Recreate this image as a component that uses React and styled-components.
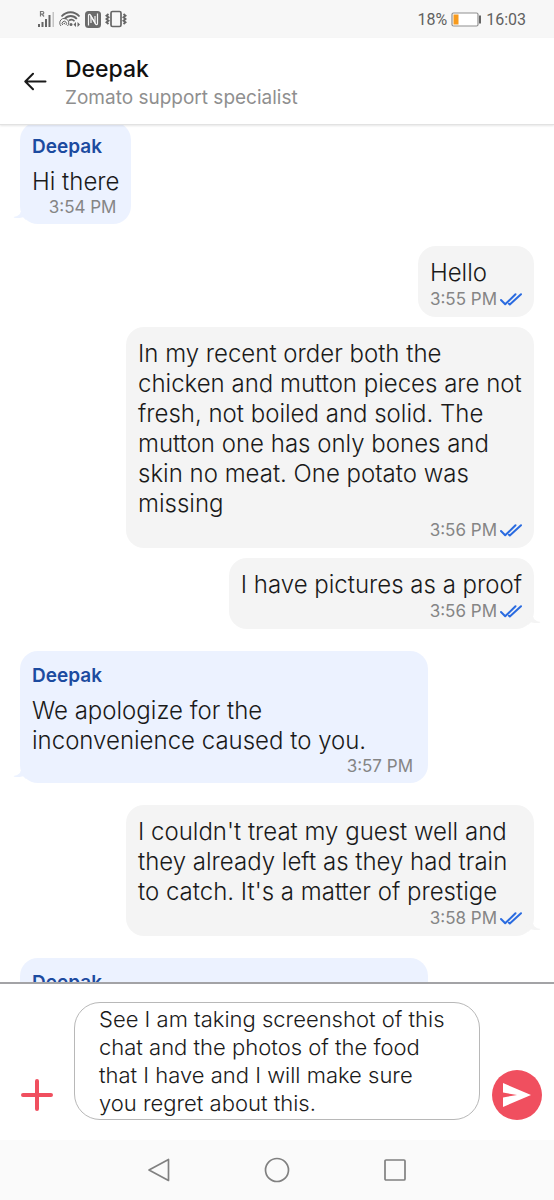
import React, { useState } from 'react';
import styled, { createGlobalStyle, css } from 'styled-components';

const GlobalStyle = createGlobalStyle`
  * {
    box-sizing: border-box;
  }
  body {
    margin: 0;
    background: #fff;
    color: #1a1a1a;
    font-family: Inter, 'Open Sans', sans-serif;
  }
  button, textarea {
    font: inherit;
    color: inherit;
  }
`;

const Screen = styled.div`
  display: flex;
  flex-direction: column;
  height: 100vh;
  overflow: hidden;
`;

const StatusBar = styled.div`
  display: flex;
  justify-content: space-between;
  align-items: center;
  flex: none;
  height: 38px;
  padding: 0 28px 0 37px;
  background: #f7f7f7;
  color: #616161;
  font-family: Roboto, sans-serif;
  font-size: 16px;
`;

const StatusGroup = styled.div`
  display: flex;
  align-items: center;
  gap: 4px;

  svg {
    display: block;
  }
`;

const Header = styled.header`
  display: flex;
  align-items: center;
  flex: none;
  gap: 16px;
  height: 87px;
  padding: 0 22px;
  background: #fff;
  border-bottom: 1px solid #e2e2e2;
  box-shadow: 0 1px 2px rgba(0, 0, 0, 0.1);
  z-index: 1;
`;

const Contact = styled.div`
  padding-top: 4px;
`;

const IconButton = styled.button`
  display: flex;
  align-items: center;
  justify-content: center;
  flex: none;
  width: ${({ $size }) => $size}px;
  height: ${({ $size }) => $size}px;
  padding: 0;
  border: 0;
  border-radius: 50%;
  background: ${({ $filled }) => ($filled ? '#f04f5f' : 'none')};
  cursor: pointer;
`;

const ContactName = styled.h1`
  margin: 0;
  color: #111;
  font-size: 23px;
  font-weight: 500;
  line-height: 30px;
`;

const ContactRole = styled.p`
  margin: 0;
  color: #8f8f8f;
  font-size: 19px;
  line-height: 28px;
`;

const Chat = styled.main`
  flex: 1;
  min-height: 0;
  padding: 0 20px;
  overflow: hidden;
`;

// the list is scrolled a little way under the header
const MessageList = styled.ol`
  display: flex;
  flex-direction: column;
  gap: 22px;
  margin: -3px 0 0;
  padding: 0;
  list-style: none;
`;

const Group = styled.li`
  display: flex;
  flex-direction: column;
  align-items: ${({ $own }) => ($own ? 'flex-end' : 'flex-start')};
  gap: 10px;
`;

const Bubble = styled.article`
  position: relative;
  width: ${({ $wide }) => ($wide ? 'calc(100% - 106px)' : 'auto')};
  padding: 12px 12px 7px;
  border-radius: 18px;
  background: ${({ $own }) => ($own ? '#f4f4f4' : '#ecf2ff')};
`;

const Tail = styled.svg`
  position: absolute;
  bottom: 2px;
  fill: ${({ $own }) => ($own ? '#f4f4f4' : '#ecf2ff')};
  ${({ $own }) =>
    $own
      ? css`
          right: -7px;
          transform: scaleX(-1);
        `
      : css`
          left: -7px;
        `}
`;

const Sender = styled.h2`
  margin: 0 0 8px;
  color: #1c4ba0;
  font-size: 19px;
  font-weight: 600;
  line-height: 25px;
`;

const MessageText = styled.p`
  margin: 0;
  font-size: 24px;
  font-weight: 300;
  line-height: 30px;
  white-space: pre-line;
`;

const Meta = styled.div`
  display: flex;
  justify-content: flex-end;
  align-items: center;
  gap: 3px;
  height: ${({ $own }) => ($own ? 22 : 20)}px;
  padding-right: ${({ $own }) => ($own ? 0 : 3)}px;
  color: #858585;
  font-size: 17px;
`;

const Composer = styled.form`
  display: flex;
  align-items: flex-end;
  flex: none;
  gap: 12px;
  padding: 18px 12px 20px;
  border-top: 2px solid #a3a3a6;
  background: #fff;
`;

const Draft = styled.textarea`
  flex: 1;
  min-width: 0;
  height: 118px;
  padding: 2px 24px;
  border: 1px solid #b8b8b8;
  border-radius: 26px;
  outline: none;
  background: #fff;
  font-size: 22px;
  font-weight: 300;
  line-height: 28px;
  resize: none;
  overflow: hidden;
`;

const NavBar = styled.nav`
  display: flex;
  justify-content: center;
  align-items: center;
  flex: none;
  gap: 90px;
  height: 60px;
  background: #fafafa;
`;

const groups = [
  {
    sender: 'Deepak',
    messages: [{ text: 'Hi there', time: '3:54 PM' }],
  },
  {
    own: true,
    messages: [
      { text: 'Hello', time: '3:55 PM' },
      {
        text: 'In my recent order both the\nchicken and mutton pieces are not\nfresh, not boiled and solid. The\nmutton one has only bones and\nskin no meat. One potato was\nmissing',
        time: '3:56 PM',
        wide: true,
      },
      { text: 'I have pictures as a proof', time: '3:56 PM' },
    ],
  },
  {
    sender: 'Deepak',
    messages: [
      {
        text: 'We apologize for the\ninconvenience caused to you.',
        time: '3:57 PM',
        wide: true,
      },
    ],
  },
  {
    own: true,
    messages: [
      {
        text: "I couldn't treat my guest well and\nthey already left as they had train\nto catch. It's a matter of prestige",
        time: '3:58 PM',
        wide: true,
      },
    ],
  },
  {
    sender: 'Deepak',
    messages: [{ wide: true }],
  },
];

const SignalIcon = () => (
  <svg width="18" height="18" viewBox="0 0 18 18" fill="#666">
    <path d="M1 14h2v3H1zM4.500 12h2v5h-2zM8 9h2v8H8zM11.500 5h2v12h-2z" />
    <path d="M15.500 2H17v15h-1.500z" fill="#c4c4c4" />
    <path d="M3.500 6.500v-5h2a1.300 1.300 0 0 1 0 2.600h-2M5 4.200l2 2.300" fill="none" stroke="#777" strokeWidth="1.200" />
  </svg>
);

const WifiIcon = () => (
  <svg width="22" height="18" viewBox="0 0 22 18" fill="none" stroke="#666">
    <path d="M2.500 6.500C7.500.8 15.500.8 20.500 6.500M5.500 9C9 5 14.500 5 17.800 9" strokeWidth="1.800" />
    <path d="M10 10.500c2-1.500 3.800-1.200 5.500.7" strokeWidth="1.600" />
    <path d="M2 16a4.500 4.500 0 1 1 6.500 0M3.700 15a2.200 2.200 0 1 1 3.200 0" />
    <circle cx="5.300" cy="13.500" r=".8" fill="#666" stroke="none" />
    <circle cx="12" cy="14.500" r="1.500" fill="#666" stroke="none" />
    <path d="M17 12l-2.500 2.500L17 17zM18.500 12l2.500 2.500-2.500 2.500z" fill="#666" stroke="none" />
  </svg>
);

const NfcIcon = () => (
  <svg width="16" height="17" viewBox="0 0 16 17">
    <rect width="16" height="17" rx="3.500" fill="#6b6b6b" />
    <path d="M3.500 14.500V4.500c0-1.500 1.200-1.500 1.800-.5l4.700 8V5" fill="none" stroke="#f7f7f7" strokeWidth="1.200" />
    <path d="M12.500 2.500v10c0 1.500-1.200 1.500-1.800.5L6 5v7" fill="none" stroke="#f7f7f7" strokeWidth="1.200" />
  </svg>
);

const VibrateIcon = () => (
  <svg width="22" height="18" viewBox="0 0 22 18" fill="none" stroke="#666">
    <rect x="6" y="1.500" width="10" height="15" rx="1.500" strokeWidth="1.700" />
    <path d="M3.500 4L1.500 5.700l2 1.600-2 1.700 2 1.700-2 1.600 2 1.700M18.500 4l2 1.700-2 1.600 2 1.700-2 1.700 2 1.600-2 1.700" strokeWidth="1.900" />
  </svg>
);

const BatteryIcon = () => (
  <svg width="31" height="15" viewBox="0 0 31 15">
    <rect x="1" y="1" width="26" height="13" rx="1.500" fill="#fff" stroke="#8f8f8f" strokeWidth="1.200" />
    <rect x="2.500" y="2.500" width="5" height="10" fill="#f79a1c" />
    <rect x="28" y="3.500" width="2" height="8" fill="#666" />
  </svg>
);

const DoubleCheck = () => (
  <svg width="22" height="13" viewBox="0 0 22 13" fill="none" stroke="#2a6be0" strokeWidth="2">
    <path d="M1 7l4.200 4.300L15.500 1.200M9 10.700l.8.800L21 1.200" strokeLinecap="round" strokeLinejoin="round" />
  </svg>
);

const Message = ({ message, sender, own, last }) => (
  <Bubble $own={own} $wide={message.wide}>
    {sender && <Sender>{sender}</Sender>}
    {message.text && <MessageText>{message.text}</MessageText>}
    {message.time && (
      <Meta $own={own}>
        <time>{message.time}</time>
        {own && <DoubleCheck />}
      </Meta>
    )}
    {last && message.time && (
      <Tail $own={own} width="16" height="10" viewBox="0 0 16 10" aria-hidden="true">
        <path d="M7.500 0C7.500 2.500 4.500 4.200 1.300 4.800.5 5 .5 5.600 1.300 5.700 4.500 6.200 8 6 10 5.300L13 8l3-4-6-4z" />
      </Tail>
    )}
  </Bubble>
);

const App = () => {
  const [draft, setDraft] = useState(
    'See I am taking screenshot of this\nchat and the photos of the food\nthat I have and I will make sure\nyou regret about this.'
  );

  return (
    <Screen>
      <GlobalStyle />
      <StatusBar>
        <StatusGroup>
          <SignalIcon />
          <WifiIcon />
          <NfcIcon />
          <VibrateIcon />
        </StatusGroup>
        <StatusGroup>
          <span>18%</span>
          <BatteryIcon />
          <span>16:03</span>
        </StatusGroup>
      </StatusBar>

      <Header>
        <IconButton type="button" aria-label="Back" $size={27}>
          <svg width="23" height="19" viewBox="0 0 23 19" fill="none" stroke="#1a1a1a" strokeWidth="2" strokeLinecap="round" strokeLinejoin="round">
            <path d="M21.500 9.500H1.500M9 1.800L1.300 9.500 9 17.200" />
          </svg>
        </IconButton>
        <Contact>
          <ContactName>Deepak</ContactName>
          <ContactRole>Zomato support specialist</ContactRole>
        </Contact>
      </Header>

      <Chat>
        <MessageList>
          {groups.map((group, i) => (
            <Group key={i} $own={group.own}>
              {group.messages.map((message, j) => (
                <Message
                  key={j}
                  message={message}
                  own={group.own}
                  sender={j === 0 ? group.sender : null}
                  last={j === group.messages.length - 1}
                />
              ))}
            </Group>
          ))}
        </MessageList>
      </Chat>

      <Composer onSubmit={(e) => e.preventDefault()}>
        <IconButton type="button" aria-label="Add attachment" $size={50}>
          <svg width="34" height="34" viewBox="0 0 34 34" stroke="#f04f5f" strokeWidth="4" strokeLinecap="round">
            <path d="M17 3v28M3 17h28" />
          </svg>
        </IconButton>
        <Draft aria-label="Message" value={draft} onChange={(e) => setDraft(e.target.value)} />
        <IconButton type="submit" aria-label="Send" $size={50} $filled>
          <svg width="28" height="26" viewBox="0 0 28 26" fill="#fff">
            <path d="M0 1L28 13 0 25V15.500L14 13 0 10.500z" />
          </svg>
        </IconButton>
      </Composer>

      <NavBar aria-label="System">
        <IconButton type="button" aria-label="Back" $size={28}>
          <svg width="24" height="26" viewBox="0 0 24 26" fill="none" stroke="#808080" strokeWidth="1.700" strokeLinejoin="round">
            <path d="M21.500 2.500v21L2 13z" />
          </svg>
        </IconButton>
        <IconButton type="button" aria-label="Home" $size={28}>
          <svg width="26" height="26" viewBox="0 0 26 26" fill="none" stroke="#808080" strokeWidth="1.700">
            <circle cx="13" cy="13" r="11.500" />
          </svg>
        </IconButton>
        <IconButton type="button" aria-label="Recent apps" $size={28}>
          <svg width="24" height="24" viewBox="0 0 24 24" fill="none" stroke="#808080" strokeWidth="1.700">
            <rect x="2" y="2" width="20" height="20" rx="1" />
          </svg>
        </IconButton>
      </NavBar>
    </Screen>
  );
};

export default App;
